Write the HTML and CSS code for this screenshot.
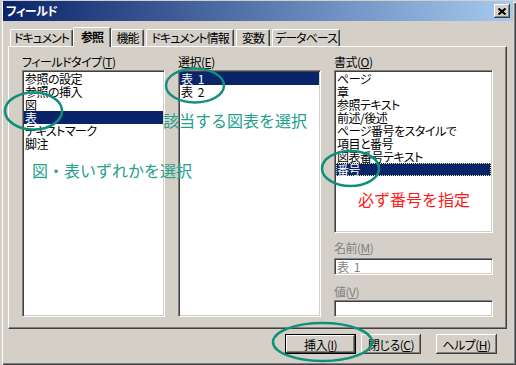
FILE: index.html
```html
<!DOCTYPE html>
<html lang="ja">
<head>
  <meta charset="UTF-8">
  <title>フィールド</title>
  <link rel="stylesheet" href="styles.css">
</head>
<body>
  <div class="dialog">
    <div class="titlebar">
      <span class="title">フィールド</span>
      <span class="close-btn">
        <svg width="8" height="7" viewBox="0 0 8 7"><path d="M0.5 0.5L7.5 6.5M7.5 0.5L0.5 6.5" stroke="#000" stroke-width="2"/></svg>
      </span>
    </div>

    <!-- Tabs -->
    <div class="tabs">
      <div class="tab tab-doc">ドキュメント</div>
      <div class="tab active">参照</div>
      <div class="tab tab-func">機能</div>
      <div class="tab tab-info">ドキュメント情報</div>
      <div class="tab tab-var">変数</div>
      <div class="tab tab-db">データベース</div>
    </div>

    <div class="panel">
      <div class="col col-type">
        <div class="caption">フィールドタイプ(<u>T</u>)</div>
        <ul class="listbox">
          <li>参照の設定</li>
          <li>参照の挿入</li>
          <li>図</li>
          <li class="selected">表</li>
          <li>テキストマーク</li>
          <li>脚注</li>
        </ul>
      </div>

      <div class="col col-select">
        <div class="caption">選択(<u>E</u>)</div>
        <ul class="listbox">
          <li class="selected">表 1</li>
          <li>表 2</li>
        </ul>
      </div>

      <div class="col col-format">
        <div class="caption">書式(<u>O</u>)</div>
        <ul class="listbox short">
          <li>ページ</li>
          <li>章</li>
          <li>参照テキスト</li>
          <li>前述/後述</li>
          <li>ページ番号をスタイルで</li>
          <li>項目と番号</li>
          <li>図表番号テキスト</li>
          <li class="selected focused">番号</li>
        </ul>
        <div class="caption disabled field-name">名前(<u>M</u>)</div>
        <div class="textbox disabled">表 1</div>
        <div class="caption disabled field-value">値(<u>V</u>)</div>
        <div class="textbox"></div>
      </div>
    </div>

    <div class="buttons">
      <button class="btn default">挿入(<u>I</u>)</button>
      <button class="btn btn-close">閉じる(<u>C</u>)</button>
      <button class="btn btn-help">ヘルプ(<u>H</u>)</button>
    </div>

    <!-- Annotations drawn over the dialog -->
    <svg class="marks" width="516" height="365" viewBox="0 0 516 365">
      <ellipse cx="33.5" cy="111" rx="28.5" ry="18.5"/>
      <ellipse cx="195" cy="85.5" rx="29" ry="17"/>
      <ellipse cx="350.5" cy="168.5" rx="28.5" ry="17.5"/>
      <ellipse cx="322.5" cy="342" rx="49.5" ry="19"/>
    </svg>
    <div class="note note-select">該当する図表を選択</div>
    <div class="note note-type">図・表いずれかを選択</div>
    <div class="note note-format">必ず番号を指定</div>
  </div>
</body>
</html>
```

FILE: styles.css
```css
body {
  margin: 0;
  background: #d4d0c8;
  font-family: "Noto Sans CJK JP", "Liberation Sans", sans-serif;
  font-size: 12px;
  font-feature-settings: "palt";
  letter-spacing: -0.5px;
  color: #000;
}
.dialog {
  position: relative;
  width: 516px;
  height: 365px;
  box-sizing: border-box;
  padding: 1px 3px 0;
  background: #d4d0c8;
  box-shadow: inset 2px 2px #d4d0c8, inset 3px 3px #fff,
              inset -1px -1px #404040, inset -2px -2px #808080;
}

/* title bar */
.titlebar {
  height: 20px;
  display: flex;
  align-items: center;
  justify-content: space-between;
  padding: 0 3px 0 3px;
  background: linear-gradient(to right, #0a246a, #a6caf0);
}
.title {
  color: #fff;
  font-weight: bold;
  line-height: 14px;
}
.close-btn {
  width: 16px;
  height: 14px;
  box-sizing: border-box;
  display: flex;
  align-items: center;
  justify-content: center;
  background: #d4d0c8;
  box-shadow: inset -1px -1px #404040, inset 1px 1px #fff,
              inset -2px -2px #808080;
}

/* tabs */
.tabs {
  display: flex;
  align-items: flex-end;
  gap: 2px;
  height: 19px;
  margin-top: 6px;
  padding-left: 7px;
}
.tab {
  height: 17px;
  box-sizing: border-box;
  padding: 0;
  line-height: 15px;
  text-align: center;
  letter-spacing: -1px;
  border: 1px solid #fff;
  border-right-color: #404040;
  border-bottom: none;
  border-radius: 2px 2px 0 0;
  box-shadow: inset -1px 0 #808080;
  white-space: nowrap;
}
.tab-doc { width: 63px; }
.tab-func { width: 33px; }
.tab-info { width: 88px; }
.tab-var { width: 34px; }
.tab-db { width: 68px; }
.tab.active {
  position: relative;
  z-index: 1;
  width: 38px;
  height: 20px;
  margin: 0 -2px -1px;
  line-height: 17px;
  font-weight: bold;
  background: #d4d0c8;
}

/* tab page */
.panel {
  display: flex;
  gap: 13px;
  height: 283px;
  box-sizing: border-box;
  margin: 0 6px 0 5px;
  padding: 8px 13px 0;
  border: 1px solid #fff;
  border-right-color: #404040;
  border-bottom-color: #404040;
  box-shadow: inset -1px -1px #808080;
}
.col {
  display: flex;
  flex-direction: column;
}
.col-type,
.col-select {
  flex: 0 0 143px;
}
.col-format {
  flex: 1;
}
.caption {
  height: 15px;
  line-height: 13px;
  white-space: nowrap;
}
.caption.disabled {
  color: #808080;
}
.field-name {
  margin-top: 8px;
  height: 17px;
}
.field-value {
  margin-top: 10px;
}

.listbox,
.textbox {
  margin: 0;
  padding: 1px;
  box-sizing: border-box;
  background: #fff;
  word-spacing: 3px;
  border: 1px solid #808080;
  border-right-color: #fff;
  border-bottom-color: #fff;
  box-shadow: inset 1px 1px #404040, inset -1px -1px #d4d0c8;
}
.listbox {
  list-style: none;
  height: 247px;
}
.listbox.short {
  height: 163px;
}
.listbox li {
  height: 13px;
  line-height: 13px;
  padding-left: 1px;
  white-space: nowrap;
}
.listbox li.selected {
  background: #0a246a;
  color: #fff;
}
.listbox li.focused {
  outline: 1px dotted #f0e68c;
  outline-offset: -1px;
}
.textbox {
  height: 17px;
  padding: 1px 2px;
  line-height: 13px;
}
.textbox.disabled {
  color: #808080;
}

/* bottom buttons */
.buttons {
  display: flex;
  justify-content: flex-end;
  margin-top: 5px;
  padding-right: 16px;
}
.btn {
  height: 20px;
  padding: 0;
  font: inherit;
  letter-spacing: inherit;
  background: #d4d0c8;
  border: none;
  box-shadow: inset -1px -1px #404040, inset 1px 1px #fff,
              inset -2px -2px #808080;
}
.btn.default {
  width: 71px;
  border: 1px solid #000;
}
.btn-close {
  width: 60px;
  margin-left: 5px;
}
.btn-help {
  width: 61px;
  margin-left: 15px;
}

/* annotations */
.marks {
  position: absolute;
  top: 0;
  left: 0;
  pointer-events: none;
}
.marks ellipse {
  fill: none;
  stroke: #10907b;
  stroke-width: 2.5;
}
.note {
  position: absolute;
  font-size: 16px;
  line-height: 16px;
  font-feature-settings: normal;
  letter-spacing: 0;
  white-space: nowrap;
  color: #23a08c;
}
.note-select {
  left: 163px;
  top: 112px;
}
.note-type {
  left: 32px;
  top: 162px;
}
.note-format {
  left: 358px;
  top: 191px;
  color: #ff1a1a;
}
```
